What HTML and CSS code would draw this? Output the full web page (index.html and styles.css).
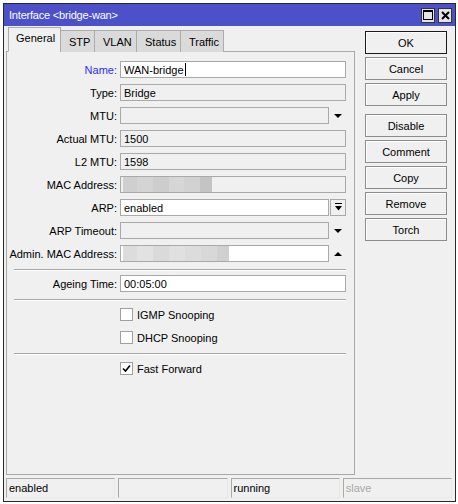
FILE: index.html
```html
<!DOCTYPE html>
<html lang="en">
<head>
  <meta charset="UTF-8"/>
  <title>Interface &lt;bridge-wan&gt;</title>
  <link rel="stylesheet" href="styles.css">
</head>
<body>
  <div class="window">
    <div class="titlebar">
      <span class="title">Interface &lt;bridge-wan&gt;</span>
      <span class="tbtn">
        <svg width="10" height="10" viewBox="0 0 10 10"><rect x="0.5" y="0.5" width="9" height="9" fill="none" stroke="#000"/><rect x="0" y="0" width="10" height="2" fill="#000"/></svg>
      </span>
      <span class="tbtn">
        <svg width="9" height="9" viewBox="0 0 9 9"><path d="M1 1 L8 8 M8 1 L1 8" stroke="#000" stroke-width="2"/></svg>
      </span>
    </div>

    <div class="main">
      <div class="left">
        <div class="tabs">
          <div class="tab active">General</div>
          <div class="tab">STP</div>
          <div class="tab">VLAN</div>
          <div class="tab">Status</div>
          <div class="tab">Traffic</div>
        </div>
        <div class="panel">
          <div class="form">
            <div class="row">
              <label class="lbl blue">Name:</label>
              <div class="field white">WAN-bridge<span class="caret"></span></div>
            </div>
            <div class="row">
              <label class="lbl">Type:</label>
              <div class="field">Bridge</div>
            </div>
            <div class="row">
              <label class="lbl">MTU:</label>
              <div class="combo">
                <div class="field"></div>
                <span class="arrow down"></span>
              </div>
            </div>
            <div class="row">
              <label class="lbl">Actual MTU:</label>
              <div class="field">1500</div>
            </div>
            <div class="row">
              <label class="lbl">L2 MTU:</label>
              <div class="field">1598</div>
            </div>
            <div class="row">
              <label class="lbl">MAC Address:</label>
              <div class="field blur">
                <span class="px" style="background:#cfcfcf;width:14px"></span>
                <span class="px" style="background:#d4d4d4;width:16px"></span>
                <span class="px" style="background:#cdcdcd;width:16px"></span>
                <span class="px" style="background:#d6d6d6;width:15px"></span>
                <span class="px" style="background:#d2d2d2;width:16px"></span>
                <span class="px" style="background:#c4c4c4;width:12px"></span>
              </div>
            </div>
            <div class="row">
              <label class="lbl">ARP:</label>
              <div class="combo">
                <div class="field white">enabled</div>
                <span class="dropbtn">
                  <svg width="9" height="9" viewBox="0 0 9 9"><rect x="1" y="0" width="7" height="1" fill="#000"/><path d="M1 3 H8 L4.5 7.5 Z" fill="#000"/></svg>
                </span>
              </div>
            </div>
            <div class="row">
              <label class="lbl">ARP Timeout:</label>
              <div class="combo">
                <div class="field"></div>
                <span class="arrow down"></span>
              </div>
            </div>
            <div class="row">
              <label class="lbl">Admin. MAC Address:</label>
              <div class="combo">
                <div class="field white blur">
                  <span class="px" style="background:#dcdcdc;width:14px"></span>
                  <span class="px" style="background:#e2e2e2;width:16px"></span>
                  <span class="px" style="background:#dadada;width:16px"></span>
                  <span class="px" style="background:#e0e0e0;width:16px"></span>
                  <span class="px" style="background:#dcdcdc;width:16px"></span>
                  <span class="px" style="background:#d8d8d8;width:16px"></span>
                  <span class="px" style="background:#d0d0d0;width:12px"></span>
                </div>
                <span class="arrow up"></span>
              </div>
            </div>

            <div class="sep"></div>

            <div class="row">
              <label class="lbl">Ageing Time:</label>
              <div class="field white">00:05:00</div>
            </div>

            <div class="sep"></div>

            <div class="row check">
              <span></span>
              <label class="cb"><span class="box"></span>IGMP Snooping</label>
            </div>
            <div class="row check next">
              <span></span>
              <label class="cb"><span class="box"></span>DHCP Snooping</label>
            </div>

            <div class="sep tight"></div>

            <div class="row check">
              <span></span>
              <label class="cb">
                <span class="box">
                  <svg width="9" height="9" viewBox="0 0 9 9"><path d="M1 4.5 L3.5 7 L8 1.5" fill="none" stroke="#000" stroke-width="1.6"/></svg>
                </span>Fast Forward
              </label>
            </div>
          </div>
        </div>
      </div>

      <div class="buttons">
        <button class="btn default">OK</button>
        <button class="btn">Cancel</button>
        <button class="btn">Apply</button>
        <button class="btn spaced">Disable</button>
        <button class="btn">Comment</button>
        <button class="btn">Copy</button>
        <button class="btn">Remove</button>
        <button class="btn">Torch</button>
      </div>
    </div>

    <div class="status">
      <div class="cell">enabled</div>
      <div class="cell"></div>
      <div class="cell">running</div>
      <div class="cell muted">slave</div>
    </div>
  </div>
</body>
</html>
```

FILE: styles.css
```css
* { box-sizing: border-box; }
body {
  margin: 0; padding: 3px 0 0 3px; background: #fff;
  font-family: "Liberation Sans", Arial, sans-serif; font-size: 11px; color: #000;
}
.window {
  width: 453px; height: 499px; border: 1px solid #2a2a2a;
  background: #f0f0f0; display: flex; flex-direction: column;
}

/* title bar */
.titlebar {
  height: 22px; background: #4c51c9; color: #fff;
  display: flex; align-items: center; gap: 3px; padding: 0 3px 0 5px;
}
.title { flex: 1; font-size: 11px; letter-spacing: -.2px; }
.tbtn {
  width: 14px; height: 15px; background: #e4e4e4; border: 1px solid #333;
  display: flex; align-items: center; justify-content: center;
}

/* main area */
.main { flex: 1; display: flex; padding: 1px 0 0 2px; }
.left { width: 349px; display: flex; flex-direction: column; }
.tabs { display: flex; align-items: flex-end; height: 25px; margin-left: 2px; position: relative; z-index: 1; }
.tab {
  height: 22px; padding: 0 8px; display: flex; align-items: center;
  background: #dadada; border: 1px solid #acacac; border-bottom: none; margin-left: -1px;
}
.tab:nth-child(2) { width: 35px; }
.tab:nth-child(3) { width: 43px; }
.tab:nth-child(4) { width: 45px; }
.tab:nth-child(5) { width: 44px; }
.tab.active {
  height: 25px; width: 53px; margin-left: 0; background: #f0f0f0;
  padding: 0 0 3px 7px; border-bottom: 1px solid #f0f0f0;
}
.panel {
  height: 424px; margin-top: -1px; border: 1px solid #a9a9a9;
  background: #f0f0f0; padding: 9px 8px 0 0;
}
.form { display: flex; flex-direction: column; gap: 6px; }
.row { display: grid; grid-template-columns: 110px 1fr; column-gap: 3px; height: 17px; align-items: center; }
.lbl { text-align: right; white-space: nowrap; }
.lbl.blue { color: #2a2aff; }
.field {
  height: 17px; border: 1px solid #a9a9a9; padding: 0 3px;
  display: flex; align-items: center; white-space: nowrap; overflow: hidden;
}
.field.white { background: #fff; }
.caret { display: inline-block; width: 1px; height: 13px; background: #000; margin-left: 1px; }
.combo { display: flex; height: 17px; }
.combo .field { flex: 1; }
.arrow { width: 17px; display: flex; align-items: center; justify-content: center; }
.arrow::after { content: ""; border-left: 4px solid transparent; border-right: 4px solid transparent; }
.arrow.down::after { border-top: 4px solid #000; }
.arrow.up::after { border-bottom: 4px solid #000; }
.dropbtn {
  width: 16px; margin-left: 1px; border: 1px solid #a9a9a9; background: #f0f0f0;
  display: flex; align-items: center; justify-content: center;
}
.blur { padding: 0 0 0 2px; }
.px { display: block; height: 15px; }

.sep { margin: 1px 0 -2px 7px; border-top: 1px solid #a9a9a9; border-bottom: 1px solid #fff; }
.sep.tight { margin-top: 0; }
.row.check { height: 19px; }
.row.check.next { margin-top: -2px; }
.cb { display: flex; align-items: center; gap: 4px; }
.box {
  width: 13px; height: 13px; border: 1px solid #a0a0a0; background: #fff;
  display: flex; align-items: center; justify-content: center;
}

/* right buttons */
.buttons { display: flex; flex-direction: column; gap: 3px; padding: 4px 0 0 10px; }
.btn {
  width: 82px; height: 23px; font: inherit; color: #000; padding: 0;
  background: #f0f0f0; border: 1px solid #8c8c8c; box-shadow: inset 1px 1px #fff;
}
.btn.default { border-color: #1a1a1a; }
.btn.spaced { margin-top: 5px; }

/* status bar */
.status {
  display: grid; grid-template-columns: repeat(4, 1fr); gap: 3px;
  height: 20px; margin: 2px 3px 3px 2px;
}
.cell {
  border: 1px solid #a9a9a9; border-right-color: #e8e8e8; border-bottom-color: #e8e8e8;
  padding: 0 2px; display: flex; align-items: center;
}
.cell.muted { color: #a8a8a8; }
```
